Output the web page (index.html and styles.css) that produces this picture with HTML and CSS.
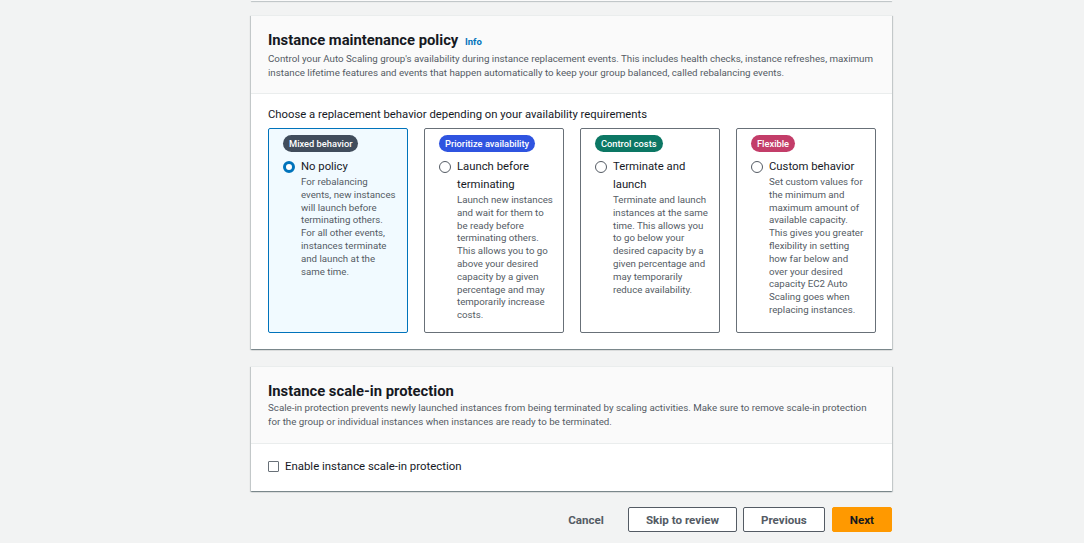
FILE: index.html
```html
<!DOCTYPE html>
<html lang="en">
<head>
<meta charset="utf-8">
<title>Advanced options</title>
<link rel="stylesheet" href="styles.css">
</head>
<body>
<main class="page">
  <div class="prev-card"></div>

  <section class="container">
    <header class="container-header">
      <h2 class="title">Instance maintenance policy <a class="info" href="#">Info</a></h2>
      <p class="desc">Control your Auto Scaling group's availability during instance replacement events. This includes health checks, instance refreshes, maximum instance lifetime features and events that happen automatically to keep your group balanced, called rebalancing events.</p>
    </header>
    <div class="container-body">
      <p class="field-label">Choose a replacement behavior depending on your availability requirements</p>
      <div class="tiles">
        <div class="tile selected">
          <span class="badge badge-grey">Mixed behavior</span>
          <div class="tile-row">
            <span class="radio checked"></span>
            <div class="tile-text">
              <div class="tile-label">No policy</div>
              <div class="tile-desc">For rebalancing events, new instances will launch before terminating others. For all other events, instances terminate and launch at the same time.</div>
            </div>
          </div>
        </div>
        <div class="tile">
          <span class="badge badge-blue">Prioritize availability</span>
          <div class="tile-row">
            <span class="radio"></span>
            <div class="tile-text">
              <div class="tile-label">Launch before terminating</div>
              <div class="tile-desc">Launch new instances and wait for them to be ready before terminating others. This allows you to go above your desired capacity by a given percentage and may temporarily increase costs.</div>
            </div>
          </div>
        </div>
        <div class="tile">
          <span class="badge badge-green">Control costs</span>
          <div class="tile-row">
            <span class="radio"></span>
            <div class="tile-text">
              <div class="tile-label">Terminate and launch</div>
              <div class="tile-desc">Terminate and launch instances at the same time. This allows you to go below your desired capacity by a given percentage and may temporarily reduce availability.</div>
            </div>
          </div>
        </div>
        <div class="tile">
          <span class="badge badge-red">Flexible</span>
          <div class="tile-row">
            <span class="radio"></span>
            <div class="tile-text">
              <div class="tile-label">Custom behavior</div>
              <div class="tile-desc">Set custom values for the minimum and maximum amount of available capacity. This gives you greater flexibility in setting how far below and over your desired capacity EC2 Auto Scaling goes when replacing instances.</div>
            </div>
          </div>
        </div>
      </div>
    </div>
  </section>

  <section class="container">
    <header class="container-header">
      <h2 class="title">Instance scale-in protection</h2>
      <p class="desc">Scale-in protection prevents newly launched instances from being terminated by scaling activities. Make sure to remove scale-in protection for the group or individual instances when instances are ready to be terminated.</p>
    </header>
    <div class="container-body body-check">
      <label class="check-row"><span class="checkbox"></span>Enable instance scale-in protection</label>
    </div>
  </section>

  <div class="actions">
    <button class="btn btn-link">Cancel</button>
    <button class="btn btn-normal">Skip to review</button>
    <button class="btn btn-normal">Previous</button>
    <button class="btn btn-primary">Next</button>
  </div>
</main>
</body>
</html>
```

FILE: styles.css
```css
* { box-sizing: border-box; }
html, body { margin: 0; padding: 0; }
body {
  background: #f2f3f3;
  font-family: Roboto, "Liberation Sans", Arial, sans-serif;
  color: #16191f;
  width: 1084px;
  height: 543px;
  overflow: hidden;
}
.page {
  margin-left: 251px;
  width: 641px;
  display: flex;
  flex-direction: column;
}
.prev-card {
  height: 1px;
  background: #fafafa;
  box-shadow: 0 1px 1px 0 rgba(0,28,36,.25);
  margin-bottom: 14px;
}
.container {
  background: #fff;
  border-top: 1px solid #eaeded;
  box-shadow: 0 1px 1px 0 rgba(0,28,36,.3), 1px 1px 1px 0 rgba(0,28,36,.15), -1px 1px 1px 0 rgba(0,28,36,.15);
  margin-bottom: 16px;
}
.container-header {
  background: #fafafa;
  border-bottom: 1px solid #eaeded;
  padding: 14px 16px 13px 17px;
}
.container + .container {
  margin-top: 1px;
}
.container + .container .container-header {
  padding-bottom: 14px;
}
.title {
  margin: 0;
  font-size: 14.8px;
  line-height: 20px;
  font-weight: 700;
  color: #16191f;
}
.info {
  font-size: 9.5px;
  font-weight: 700;
  color: #0073bb;
  text-decoration: none;
  margin-left: 3px;
}
.desc {
  margin: 0;
  font-size: 9.75px;
  line-height: 14px;
  color: #545b64;
}
.container-body {
  padding: 13px 16px 16px 17px;
}
.field-label {
  margin: 0 0 5px;
  font-size: 11.3px;
  line-height: 16px;
  color: #16191f;
}
.tiles {
  display: grid;
  grid-template-columns: repeat(4, 140px);
  gap: 16px;
}
.tile {
  display: flex;
  flex-direction: column;
  align-items: flex-start;
  border: 1px solid #687078;
  border-radius: 2px;
  padding: 6px 8px 10px 14px;
  height: 205px;
}
.tile.selected {
  border-color: #0073bb;
  background: #f1faff;
}
.badge {
  display: block;
  height: 17px;
  line-height: 17px;
  padding: 0 6px;
  border-radius: 9px;
  color: #fff;
  font-size: 9.3px;
  font-weight: 500;
  white-space: nowrap;
}
.badge-grey { background: #414d5c; }
.badge-blue { background: #2f54e0; }
.badge-green { background: #0c7764; }
.badge-red { background: #c33d69; }
.tile-row {
  display: flex;
  gap: 6px;
  margin-top: 6px;
}
.radio {
  flex: none;
  width: 12px;
  height: 12px;
  border: 1px solid #545b64;
  border-radius: 50%;
  margin-top: 3px;
  background: #fff;
}
.radio.checked {
  border: 3.5px solid #0073bb;
}
.tile-label {
  font-size: 11.3px;
  line-height: 18px;
  color: #16191f;
}
.tile-desc {
  font-size: 9.7px;
  line-height: 12.8px;
  color: #545b64;
}
.body-check {
  padding: 14px 17px 17px;
}
.check-row {
  display: flex;
  align-items: center;
  gap: 6px;
  font-size: 11.4px;
  line-height: 16px;
  color: #16191f;
}
.checkbox {
  width: 11px;
  height: 11px;
  border: 1px solid #687078;
  border-radius: 1px;
  background: #fff;
}
.actions {
  display: flex;
  justify-content: flex-end;
  gap: 6px;
}
.btn {
  font-family: inherit;
  font-size: 11.6px;
  font-weight: 700;
  height: 25px;
  border-radius: 2px;
  padding: 0 17px;
  cursor: pointer;
}
.btn-link {
  background: transparent;
  border: 1px solid transparent;
  color: #545b64;
}
.btn-normal {
  background: #fff;
  border: 1px solid #545b64;
  color: #545b64;
}
.btn-primary {
  background: #ff9900;
  border: 1px solid #ff9900;
  color: #16191f;
  margin-left: 1px;
}
```
